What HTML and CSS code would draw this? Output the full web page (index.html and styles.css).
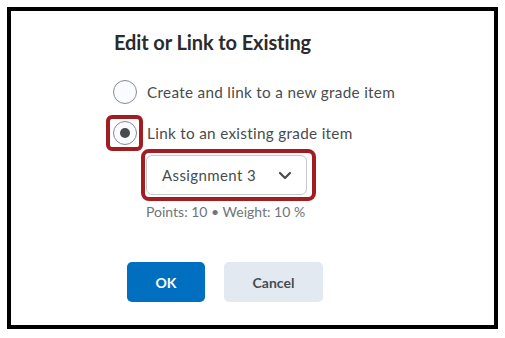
FILE: index.html
```html
<!DOCTYPE html>
<html lang="en">
<head>
  <meta charset="UTF-8" />
  <title>Edit or Link to Existing</title>
  <link rel="stylesheet" href="styles.css">
</head>
<body>
  <div class="frame">
    <h2 class="title">Edit or Link to Existing</h2>

    <div class="options">
      <label class="option">
        <span class="radio"></span>
        <span class="label">Create and link to a new grade item</span>
      </label>
      <label class="option">
        <span class="radio checked highlight"></span>
        <span class="label">Link to an existing grade item</span>
      </label>
    </div>

    <div class="select highlight-wide">
      <span>Assignment 3</span>
      <svg class="chevron" width="14" height="9" viewBox="0 0 14 9">
        <path d="M2 2 L7 7 L12 2" fill="none" stroke="#494c4e" stroke-width="2.2" stroke-linecap="round" stroke-linejoin="round"/>
      </svg>
    </div>
    <div class="meta">Points: 10 &bull; Weight: 10 %</div>

    <div class="actions">
      <button class="btn primary">OK</button>
      <button class="btn">Cancel</button>
    </div>
  </div>
</body>
</html>
```

FILE: styles.css
```css
body {
  margin: 0;
  background: #fff;
  font-family: 'Lato', sans-serif;
  color: #494c4e;
}

.frame {
  margin: 7px;
  width: 491px;
  height: 322px;
  box-sizing: border-box;
  border: 4px solid #000;
  padding: 19px 0 0 102px;
}

.title {
  margin: 0 0 0 1px;
  font-size: 20px;
  line-height: 24px;
  font-weight: 700;
  color: #2a2b2c;
  letter-spacing: -0.1px;
}

.options {
  margin-top: 26px;
  display: flex;
  flex-direction: column;
  gap: 17px;
}

.option {
  display: flex;
  align-items: center;
  gap: 10px;
  height: 24px;
}

.radio {
  position: relative;
  width: 22px;
  height: 22px;
  border: 1px solid #868b8f;
  border-radius: 50%;
  background: #f9fbff;
  display: flex;
  align-items: center;
  justify-content: center;
}

.radio.checked::before {
  content: "";
  width: 10px;
  height: 10px;
  border-radius: 50%;
  background: #494c4e;
}

.label {
  font-size: 15.3px;
  letter-spacing: 0.3px;
}

.highlight::after {
  content: "";
  position: absolute;
  inset: -7px -7px -7px -8px;
  border: 4px solid #a11d22;
  border-radius: 6px;
}

.select {
  position: relative;
  margin: 10px 0 0 33px;
  width: 161px;
  height: 40px;
  box-sizing: border-box;
  border: 1px solid #c4c9cc;
  border-radius: 6px;
  display: flex;
  align-items: center;
  justify-content: space-between;
  padding: 0 14px 0 15px;
  font-size: 15px;
  letter-spacing: 0.4px;
}

.highlight-wide::after {
  content: "";
  position: absolute;
  inset: -7px -10px -7px -6px;
  border: 4px solid #a11d22;
  border-radius: 8px;
}

.meta {
  margin: 9px 0 0 33px;
  font-size: 14px;
  line-height: 16px;
  color: #6e7477;
}

.actions {
  margin: 42px 0 0 14px;
  display: flex;
  gap: 19px;
}

.btn {
  height: 40px;
  width: 99px;
  border: none;
  border-radius: 5px;
  background: #e3e9f1;
  color: #494c4e;
  font-family: 'Lato', sans-serif;
  font-size: 14px;
  font-weight: 700;
}

.btn.primary {
  width: 78px;
  background: #006fbf;
  color: #fff;
}
```
